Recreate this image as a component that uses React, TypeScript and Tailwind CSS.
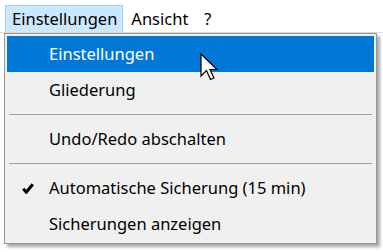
import React from "react";

const font = { fontFamily: '"Segoe UI", "Noto Sans", "Open Sans", sans-serif' };

function Item({ label, active, checked }: { label: string; active?: boolean; checked?: boolean }) {
  return (
    <div
      className={`flex items-center h-[36px] mx-[2px] ${active ? "bg-[#0078d7] text-white" : "text-black"}`}
    >
      <div className="w-[42px] flex justify-center items-center pt-[1px]">
        {checked && (
          <svg width="12" height="11" viewBox="0 0 12 11">
            <path d="M1.2 5.8 L4.3 9.2 L10.8 1.2" fill="none" stroke="#000" strokeWidth="3" />
          </svg>
        )}
      </div>
      <span className="text-[16.5px] leading-none pt-[1px]">{label}</span>
    </div>
  );
}

function Sep() {
  return (
    <div className="flex items-center mx-[4px] h-[13px]">
      <div className="h-px w-full bg-[#a0a0a0]" />
    </div>
  );
}

export default function App() {
  return (
    <div className="relative w-[383px] h-[252px] bg-white overflow-hidden" style={font}>
      <div className="flex items-stretch h-[33px] border-b border-[#d9d9d9] pt-[5px] pl-[5px]">
        <div className="bg-[#cce8ff] border border-[#99d1ff] border-b-0 pl-[6px] pr-[5px] pt-[1px] flex items-center text-[16.5px] text-black">
          Einstellungen
        </div>
        <div className="pl-[8px] pr-[8px] pt-[1px] flex items-center text-[16.5px] text-black">Ansicht</div>
        <div className="px-[8px] pt-[1px] flex items-center text-[16.5px] text-black">?</div>
      </div>

      <div className="absolute left-[4px] top-[33px] w-[373px] h-[211px] bg-[#f0f0f0] border border-[#979797] pt-[2px] shadow-[3px_3px_3px_rgba(0,0,0,0.35)]">
        <Item label="Einstellungen" active />
        <Item label="Gliederung" />
        <Sep />
        <Item label="Undo/Redo abschalten" />
        <Sep />
        <Item label="Automatische Sicherung (15 min)" checked />
        <Item label="Sicherungen anzeigen" />
      </div>

      <svg
        className="absolute left-[200px] top-[53px]"
        width="20"
        height="30"
        viewBox="0 0 20 30"
      >
        <path
          d="M1 1 L1 23 L6.5 17.5 L10.5 26.5 L14 25 L10 16.5 L17 16.5 Z"
          fill="#fff"
          stroke="#000"
          strokeWidth="1.2"
          strokeLinejoin="miter"
        />
      </svg>
    </div>
  );
}
